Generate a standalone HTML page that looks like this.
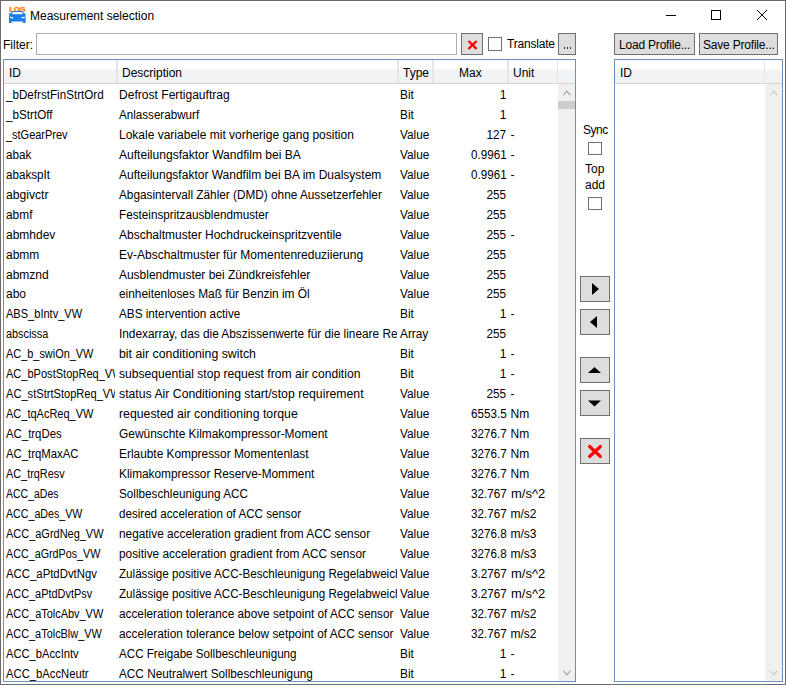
<!DOCTYPE html>
<html><head><meta charset="utf-8">
<style>
*{margin:0;padding:0;box-sizing:border-box}
html,body{width:786px;height:685px;overflow:hidden;background:#fff}
body{font-family:"Liberation Sans",sans-serif;font-size:12px;color:#000;position:relative}
.abs{position:absolute}
.win{position:absolute;left:0;top:0;width:786px;height:685px;border:1px solid #6b6b6b}
.title{position:absolute;left:30px;top:8px;font-size:12px;line-height:16px}
.btn{position:absolute;background:#dddddd;border:1px solid #707070}
.chk{position:absolute;background:#fff;border:1px solid #707070}
.lv{position:absolute;border:1px solid #6d8fb8;background:#fff;overflow:hidden}
.hdr{position:absolute;left:0;top:0;height:24px;background:linear-gradient(#fff 0,#fff 36%,#f3f4f6 44%,#f1f2f4 100%);border-bottom:1px solid #d5d5d5}
.sep{position:absolute;top:0;width:1px;height:23px;background:#e6e6e6}
.htx{position:absolute;top:2px;line-height:23px;white-space:nowrap}
.sb{position:absolute;background:#f0f0f0}
.row{position:absolute;left:0;width:560px;height:20px;line-height:20px;white-space:nowrap}
.row span{position:absolute;top:0;overflow:hidden}
.row i{font-style:normal;display:inline-block}
.c1{left:6px;width:109px}
.c2{left:119px;width:278px}
.c3{left:400px;width:33px}
.c4{left:433px;width:73.5px;text-align:right}
.c5{left:510.5px;width:46px}
</style></head><body>
<div class="win"></div>
<!-- icon -->
<svg class="abs" style="left:0;top:0" width="30" height="28" viewBox="0 0 30 28">
<text x="0" y="0" font-family="Liberation Sans" font-weight="bold" font-size="6.4" fill="#ff8a1c" stroke="#ff8a1c" stroke-width="0.45" text-anchor="middle" letter-spacing="-0.2" transform="translate(17.3 11.7) scale(1.22 1)">LOG</text>
<path d="M12.3 11.0 L22.3 11.0 L23.6 13.2 L25.6 13.4 L25.6 14.6 L25.1 15.0 L25.6 15.6 L25.6 23.0 L22.9 23.0 L22.9 21.5 L11.6 21.5 L11.6 23.0 L9.0 23.0 L9.0 15.6 L9.5 15.0 L9.0 14.6 L9.0 13.4 L11.0 13.2 Z" fill="#1a7ef0"/>
<path d="M12.9 12.0 L21.9 12.0 L22.8 14.3 L12.0 14.3 Z" fill="#fff"/>
<path d="M10.2 16.6 L13.2 17.3 L13.2 18.4 L10.2 18.0 Z" fill="#fff"/>
<path d="M24.6 16.6 L21.4 17.3 L21.4 18.4 L24.6 18.0 Z" fill="#fff"/>
</svg>
<div class="title">Measurement selection</div>
<!-- window controls -->
<div class="abs" style="left:666px;top:15px;width:10px;height:1px;background:#000"></div>
<div class="abs" style="left:711px;top:10px;width:10px;height:10px;border:1px solid #000"></div>
<svg class="abs" style="left:757px;top:10px" width="10" height="10" viewBox="0 0 10 10" shape-rendering="crispEdges" fill="#000"><rect x="0" y="0" width="1" height="1"/><rect x="9" y="0" width="1" height="1"/><rect x="1" y="1" width="1" height="1"/><rect x="8" y="1" width="1" height="1"/><rect x="2" y="2" width="1" height="1"/><rect x="7" y="2" width="1" height="1"/><rect x="3" y="3" width="1" height="1"/><rect x="6" y="3" width="1" height="1"/><rect x="4" y="4" width="1" height="1"/><rect x="5" y="4" width="1" height="1"/><rect x="5" y="5" width="1" height="1"/><rect x="4" y="5" width="1" height="1"/><rect x="6" y="6" width="1" height="1"/><rect x="3" y="6" width="1" height="1"/><rect x="7" y="7" width="1" height="1"/><rect x="2" y="7" width="1" height="1"/><rect x="8" y="8" width="1" height="1"/><rect x="1" y="8" width="1" height="1"/><rect x="9" y="9" width="1" height="1"/><rect x="0" y="9" width="1" height="1"/></svg>

<!-- filter row -->
<div class="abs" style="left:3px;top:37px;line-height:16px">Filter:</div>
<div class="abs" style="left:36px;top:33px;width:421px;height:22px;border:1px solid #abadb3;background:#fff"></div>
<div class="btn" style="left:461px;top:33px;width:22px;height:22px"></div>
<svg class="abs" style="left:467px;top:40px" width="11" height="10" viewBox="0 0 11 10"><path d="M2.2 1.8 L8.8 8.2 M8.8 1.8 L2.2 8.2" stroke="#f00" stroke-width="2.3" stroke-linecap="square"/></svg>
<div class="chk" style="left:488px;top:37px;width:14px;height:14px"></div>
<div class="abs" style="left:507px;top:36px;line-height:16px;letter-spacing:-0.2px">Translate</div>
<div class="btn" style="left:558px;top:33px;width:18px;height:22px"></div>
<div class="abs" style="left:563.5px;top:47px;width:1.3px;height:2px;background:#333"></div><div class="abs" style="left:566.5px;top:47px;width:1.3px;height:2px;background:#333"></div><div class="abs" style="left:569.5px;top:47px;width:1.3px;height:2px;background:#333"></div>
<div class="btn" style="left:614px;top:33px;width:81px;height:22px"></div>
<div class="abs" style="left:619px;top:37px;line-height:16px;letter-spacing:-0.2px">Load Profile...</div>
<div class="btn" style="left:699px;top:33px;width:79px;height:22px"></div>
<div class="abs" style="left:703px;top:37px;line-height:16px;letter-spacing:-0.2px">Save Profile...</div>

<!-- left listview -->
<div class="lv" style="left:3px;top:59px;width:573px;height:623px">
  <div class="hdr" style="width:571px"></div>
  <div class="sep" style="left:112px;width:2px"></div>
  <div class="sep" style="left:393px;width:2px"></div>
  <div class="sep" style="left:428px;width:2px"></div>
  <div class="sep" style="left:503px;width:2px"></div>
  <div class="sep" style="left:553px"></div>
  <div class="htx" style="left:5px">ID</div>
  <div class="htx" style="left:118px">Description</div>
  <div class="htx" style="left:399px">Type</div>
  <div class="htx" style="left:455px">Max</div>
  <div class="htx" style="left:509px">Unit</div>
  <div class="sb" style="left:554px;top:24px;width:17px;height:597px"></div>
  <div class="abs" style="left:554px;top:41px;width:17px;height:8px;background:#cdcdcd"></div>
  <svg class="abs" style="left:559px;top:30px" width="8" height="6" viewBox="0 0 8 6"><path d="M0.3 5.2 L3.75 1.2 L7.2 5.2" stroke="#a0a0a0" stroke-width="1.2" fill="none"/></svg>
  <svg class="abs" style="left:559px;top:610px" width="8" height="6" viewBox="0 0 8 6"><path d="M0.3 0.8 L3.75 4.8 L7.2 0.8" stroke="#a0a0a0" stroke-width="1.2" fill="none"/></svg>
</div>
<div class="abs" style="left:0;top:0;width:786px;height:685px;pointer-events:none">
<div class="row" style="top:85px"><span class="c1"><i style="transform:scaleX(0.9700);transform-origin:left">_bDefrstFinStrtOrd</i></span><span class="c2"><i style="transform:scaleX(1.0064);transform-origin:left">Defrost Fertigauftrag</i></span><span class="c3"><i style="transform:scaleX(0.9850);transform-origin:left">Bit</i></span><span class="c4">1</span><span class="c5"></span></div>
<div class="row" style="top:105px"><span class="c1"><i style="transform:scaleX(0.9729);transform-origin:left">_bStrtOff</i></span><span class="c2"><i style="transform:scaleX(0.9687);transform-origin:left">Anlasserabwurf</i></span><span class="c3"><i style="transform:scaleX(0.9850);transform-origin:left">Bit</i></span><span class="c4">1</span><span class="c5"></span></div>
<div class="row" style="top:125px"><span class="c1"><i style="transform:scaleX(0.9134);transform-origin:left">_stGearPrev</i></span><span class="c2">Lokale variabele mit vorherige gang position</span><span class="c3"><i style="transform:scaleX(0.9850);transform-origin:left">Value</i></span><span class="c4"><i style="transform:scaleX(0.9800);transform-origin:right">127</i></span><span class="c5">-</span></div>
<div class="row" style="top:145px"><span class="c1"><i style="transform:scaleX(0.9731);transform-origin:left">abak</i></span><span class="c2"><i style="transform:scaleX(1.0050);transform-origin:left">Aufteilungsfaktor Wandfilm bei BA</i></span><span class="c3"><i style="transform:scaleX(0.9850);transform-origin:left">Value</i></span><span class="c4"><i style="transform:scaleX(0.9700);transform-origin:right">0.9961</i></span><span class="c5">-</span></div>
<div class="row" style="top:165px"><span class="c1"><i style="transform:scaleX(0.9689);transform-origin:left">abakspIt</i></span><span class="c2">Aufteilungsfaktor Wandfilm bei BA im Dualsystem</span><span class="c3"><i style="transform:scaleX(0.9850);transform-origin:left">Value</i></span><span class="c4"><i style="transform:scaleX(0.9700);transform-origin:right">0.9961</i></span><span class="c5">-</span></div>
<div class="row" style="top:185px"><span class="c1"><i style="transform:scaleX(1.0119);transform-origin:left">abgivctr</i></span><span class="c2"><i style="transform:scaleX(0.9828);transform-origin:left">Abgasintervall Zähler (DMD) ohne Aussetzerfehler</i></span><span class="c3"><i style="transform:scaleX(0.9850);transform-origin:left">Value</i></span><span class="c4"><i style="transform:scaleX(0.9800);transform-origin:right">255</i></span><span class="c5"></span></div>
<div class="row" style="top:205px"><span class="c1"><i style="transform:scaleX(0.9926);transform-origin:left">abmf</i></span><span class="c2"><i style="transform:scaleX(0.9760);transform-origin:left">Festeinspritzausblendmuster</i></span><span class="c3"><i style="transform:scaleX(0.9850);transform-origin:left">Value</i></span><span class="c4"><i style="transform:scaleX(0.9800);transform-origin:right">255</i></span><span class="c5"></span></div>
<div class="row" style="top:225px"><span class="c1">abmhdev</span><span class="c2">Abschaltmuster Hochdruckeinspritzventile</span><span class="c3"><i style="transform:scaleX(0.9850);transform-origin:left">Value</i></span><span class="c4"><i style="transform:scaleX(0.9800);transform-origin:right">255</i></span><span class="c5">-</span></div>
<div class="row" style="top:245px"><span class="c1">abmm</span><span class="c2">Ev-Abschaltmuster für Momentenreduziierung</span><span class="c3"><i style="transform:scaleX(0.9850);transform-origin:left">Value</i></span><span class="c4"><i style="transform:scaleX(0.9800);transform-origin:right">255</i></span><span class="c5"></span></div>
<div class="row" style="top:265px"><span class="c1">abmznd</span><span class="c2"><i style="transform:scaleX(0.9958);transform-origin:left">Ausblendmuster bei Zündkreisfehler</i></span><span class="c3"><i style="transform:scaleX(0.9850);transform-origin:left">Value</i></span><span class="c4"><i style="transform:scaleX(0.9800);transform-origin:right">255</i></span><span class="c5"></span></div>
<div class="row" style="top:284px"><span class="c1">abo</span><span class="c2"><i style="transform:scaleX(0.9891);transform-origin:left">einheitenloses Maß für Benzin im Öl</i></span><span class="c3"><i style="transform:scaleX(0.9850);transform-origin:left">Value</i></span><span class="c4"><i style="transform:scaleX(0.9800);transform-origin:right">255</i></span><span class="c5"></span></div>
<div class="row" style="top:304px"><span class="c1"><i style="transform:scaleX(0.9205);transform-origin:left">ABS_bIntv_VW</i></span><span class="c2"><i style="transform:scaleX(0.9774);transform-origin:left">ABS intervention active</i></span><span class="c3"><i style="transform:scaleX(0.9850);transform-origin:left">Bit</i></span><span class="c4">1</span><span class="c5">-</span></div>
<div class="row" style="top:324px"><span class="c1"><i style="transform:scaleX(0.9043);transform-origin:left">abscissa</i></span><span class="c2"><i style="transform:scaleX(0.9856);transform-origin:left">Indexarray, das die Abszissenwerte für die lineare Regression</i></span><span class="c3"><i style="transform:scaleX(0.9850);transform-origin:left">Array</i></span><span class="c4"><i style="transform:scaleX(0.9800);transform-origin:right">255</i></span><span class="c5"></span></div>
<div class="row" style="top:344px"><span class="c1"><i style="transform:scaleX(0.9104);transform-origin:left">AC_b_swiOn_VW</i></span><span class="c2"><i style="transform:scaleX(1.0263);transform-origin:left">bit air conditioning switch</i></span><span class="c3"><i style="transform:scaleX(0.9850);transform-origin:left">Bit</i></span><span class="c4">1</span><span class="c5">-</span></div>
<div class="row" style="top:364px"><span class="c1"><i style="transform:scaleX(0.9200);transform-origin:left">AC_bPostStopReq_VW</i></span><span class="c2"><i style="transform:scaleX(1.0109);transform-origin:left">subsequential stop request from air condition</i></span><span class="c3"><i style="transform:scaleX(0.9850);transform-origin:left">Bit</i></span><span class="c4">1</span><span class="c5">-</span></div>
<div class="row" style="top:384px"><span class="c1"><i style="transform:scaleX(0.9250);transform-origin:left">AC_stStrtStopReq_VW</i></span><span class="c2"><i style="transform:scaleX(1.0213);transform-origin:left">status Air Conditioning start/stop requirement</i></span><span class="c3"><i style="transform:scaleX(0.9850);transform-origin:left">Value</i></span><span class="c4"><i style="transform:scaleX(0.9800);transform-origin:right">255</i></span><span class="c5">-</span></div>
<div class="row" style="top:404px"><span class="c1"><i style="transform:scaleX(0.9168);transform-origin:left">AC_tqAcReq_VW</i></span><span class="c2"><i style="transform:scaleX(1.0224);transform-origin:left">requested air conditioning torque</i></span><span class="c3"><i style="transform:scaleX(0.9850);transform-origin:left">Value</i></span><span class="c4"><i style="transform:scaleX(0.9700);transform-origin:right">6553.5</i></span><span class="c5">Nm</span></div>
<div class="row" style="top:424px"><span class="c1"><i style="transform:scaleX(0.9483);transform-origin:left">AC_trqDes</i></span><span class="c2"><i style="transform:scaleX(0.9933);transform-origin:left">Gewünschte Kilmakompressor-Moment</i></span><span class="c3"><i style="transform:scaleX(0.9850);transform-origin:left">Value</i></span><span class="c4"><i style="transform:scaleX(0.9700);transform-origin:right">3276.7</i></span><span class="c5">Nm</span></div>
<div class="row" style="top:444px"><span class="c1"><i style="transform:scaleX(0.9461);transform-origin:left">AC_trqMaxAC</i></span><span class="c2"><i style="transform:scaleX(0.9901);transform-origin:left">Erlaubte Kompressor Momentenlast</i></span><span class="c3"><i style="transform:scaleX(0.9850);transform-origin:left">Value</i></span><span class="c4"><i style="transform:scaleX(0.9700);transform-origin:right">3276.7</i></span><span class="c5">Nm</span></div>
<div class="row" style="top:464px"><span class="c1"><i style="transform:scaleX(0.9062);transform-origin:left">AC_trqResv</i></span><span class="c2"><i style="transform:scaleX(0.9859);transform-origin:left">Klimakompressor Reserve-Momment</i></span><span class="c3"><i style="transform:scaleX(0.9850);transform-origin:left">Value</i></span><span class="c4"><i style="transform:scaleX(0.9700);transform-origin:right">3276.7</i></span><span class="c5">Nm</span></div>
<div class="row" style="top:484px"><span class="c1"><i style="transform:scaleX(0.8750);transform-origin:left">ACC_aDes</i></span><span class="c2"><i style="transform:scaleX(0.9763);transform-origin:left">Sollbeschleunigung ACC</i></span><span class="c3"><i style="transform:scaleX(0.9850);transform-origin:left">Value</i></span><span class="c4"><i style="transform:scaleX(0.9700);transform-origin:right">32.767</i></span><span class="c5"><i style="transform:scaleX(1.0800);transform-origin:left">m/s^2</i></span></div>
<div class="row" style="top:504px"><span class="c1"><i style="transform:scaleX(0.8884);transform-origin:left">ACC_aDes_VW</i></span><span class="c2"><i style="transform:scaleX(0.9676);transform-origin:left">desired acceleration of ACC sensor</i></span><span class="c3"><i style="transform:scaleX(0.9850);transform-origin:left">Value</i></span><span class="c4"><i style="transform:scaleX(0.9700);transform-origin:right">32.767</i></span><span class="c5">m/s2</span></div>
<div class="row" style="top:524px"><span class="c1"><i style="transform:scaleX(0.9140);transform-origin:left">ACC_aGrdNeg_VW</i></span><span class="c2"><i style="transform:scaleX(0.9855);transform-origin:left">negative acceleration gradient from ACC sensor</i></span><span class="c3"><i style="transform:scaleX(0.9850);transform-origin:left">Value</i></span><span class="c4"><i style="transform:scaleX(0.9700);transform-origin:right">3276.8</i></span><span class="c5">m/s3</span></div>
<div class="row" style="top:544px"><span class="c1"><i style="transform:scaleX(0.8952);transform-origin:left">ACC_aGrdPos_VW</i></span><span class="c2"><i style="transform:scaleX(0.9872);transform-origin:left">positive acceleration gradient from ACC sensor</i></span><span class="c3"><i style="transform:scaleX(0.9850);transform-origin:left">Value</i></span><span class="c4"><i style="transform:scaleX(0.9700);transform-origin:right">3276.8</i></span><span class="c5">m/s3</span></div>
<div class="row" style="top:564px"><span class="c1"><i style="transform:scaleX(0.9469);transform-origin:left">ACC_aPtdDvtNgv</i></span><span class="c2"><i style="transform:scaleX(0.9690);transform-origin:left">Zulässige positive ACC-Beschleunigung Regelabweichung</i></span><span class="c3"><i style="transform:scaleX(0.9850);transform-origin:left">Value</i></span><span class="c4"><i style="transform:scaleX(0.9700);transform-origin:right">3.2767</i></span><span class="c5"><i style="transform:scaleX(1.0800);transform-origin:left">m/s^2</i></span></div>
<div class="row" style="top:584px"><span class="c1"><i style="transform:scaleX(0.9095);transform-origin:left">ACC_aPtdDvtPsv</i></span><span class="c2"><i style="transform:scaleX(0.9690);transform-origin:left">Zulässige positive ACC-Beschleunigung Regelabweichung</i></span><span class="c3"><i style="transform:scaleX(0.9850);transform-origin:left">Value</i></span><span class="c4"><i style="transform:scaleX(0.9700);transform-origin:right">3.2767</i></span><span class="c5"><i style="transform:scaleX(1.0800);transform-origin:left">m/s^2</i></span></div>
<div class="row" style="top:604px"><span class="c1"><i style="transform:scaleX(0.9112);transform-origin:left">ACC_aTolcAbv_VW</i></span><span class="c2"><i style="transform:scaleX(0.9820);transform-origin:left">acceleration tolerance above setpoint of ACC sensor</i></span><span class="c3"><i style="transform:scaleX(0.9850);transform-origin:left">Value</i></span><span class="c4"><i style="transform:scaleX(0.9700);transform-origin:right">32.767</i></span><span class="c5">m/s2</span></div>
<div class="row" style="top:624px"><span class="c1"><i style="transform:scaleX(0.9095);transform-origin:left">ACC_aTolcBlw_VW</i></span><span class="c2"><i style="transform:scaleX(0.9870);transform-origin:left">acceleration tolerance below setpoint of ACC sensor</i></span><span class="c3"><i style="transform:scaleX(0.9850);transform-origin:left">Value</i></span><span class="c4"><i style="transform:scaleX(0.9700);transform-origin:right">32.767</i></span><span class="c5">m/s2</span></div>
<div class="row" style="top:644px"><span class="c1"><i style="transform:scaleX(0.9308);transform-origin:left">ACC_bAccIntv</i></span><span class="c2"><i style="transform:scaleX(0.9678);transform-origin:left">ACC Freigabe Sollbeschleunigung</i></span><span class="c3"><i style="transform:scaleX(0.9850);transform-origin:left">Bit</i></span><span class="c4">1</span><span class="c5">-</span></div>
<div class="row" style="top:664px"><span class="c1"><i style="transform:scaleX(0.9375);transform-origin:left">ACC_bAccNeutr</i></span><span class="c2"><i style="transform:scaleX(0.9817);transform-origin:left">ACC Neutralwert Sollbeschleunigung</i></span><span class="c3"><i style="transform:scaleX(0.9850);transform-origin:left">Bit</i></span><span class="c4">1</span><span class="c5">-</span></div>
</div>

<!-- middle -->
<div class="abs" style="left:583px;top:122px;line-height:16px;letter-spacing:-0.5px">Sync</div>
<div class="chk" style="left:588px;top:142px;width:14px;height:13px"></div>
<div class="abs" style="left:585px;top:161px;line-height:16px">Top</div>
<div class="abs" style="left:585px;top:177px;line-height:16px">add</div>
<div class="chk" style="left:588px;top:197px;width:14px;height:13px"></div>

<div class="btn" style="left:580px;top:276px;width:30px;height:26px"></div>
<svg class="abs" style="left:592px;top:283px" width="8" height="12" viewBox="0 0 8 12"><path d="M0 0 L7 6 L0 12 Z" fill="#000"/></svg>
<div class="btn" style="left:580px;top:309px;width:30px;height:26px"></div>
<svg class="abs" style="left:590px;top:316px" width="8" height="12" viewBox="0 0 8 12"><path d="M7 0 L0 6 L7 12 Z" fill="#000"/></svg>
<div class="btn" style="left:580px;top:357px;width:30px;height:26px"></div>
<svg class="abs" style="left:588px;top:367px" width="13" height="6" viewBox="0 0 13 6"><path d="M0 6 L6.5 0 L13 6 Z" fill="#000"/></svg>
<div class="btn" style="left:580px;top:390px;width:30px;height:26px"></div>
<svg class="abs" style="left:588px;top:400px" width="13" height="7" viewBox="0 0 13 7"><path d="M0 0.6 L6.5 6.6 L13 0.6 Z" fill="#000"/></svg>
<div class="btn" style="left:580px;top:438px;width:30px;height:26px"></div>
<svg class="abs" style="left:587px;top:444px" width="16" height="15" viewBox="0 0 16 15"><path d="M2.6 2.5 L13.4 12.5 M13.4 2.5 L2.6 12.5" stroke="#f00" stroke-width="3.1" stroke-linecap="round"/></svg>

<!-- right listview -->
<div class="lv" style="left:614px;top:59px;width:169px;height:623px">
  <div class="hdr" style="width:167px"></div>
  <div class="sep" style="left:149px"></div>
  <div class="htx" style="left:5px">ID</div>
  <div class="sb" style="left:150px;top:24px;width:17px;height:597px"></div>
  <svg class="abs" style="left:155px;top:30px" width="8" height="6" viewBox="0 0 8 6"><path d="M0.3 5.2 L3.75 1.2 L7.2 5.2" stroke="#c8c8c8" stroke-width="1.2" fill="none"/></svg>
  <svg class="abs" style="left:155px;top:610px" width="8" height="6" viewBox="0 0 8 6"><path d="M0.3 0.8 L3.75 4.8 L7.2 0.8" stroke="#c8c8c8" stroke-width="1.2" fill="none"/></svg>
</div>
</body></html>
